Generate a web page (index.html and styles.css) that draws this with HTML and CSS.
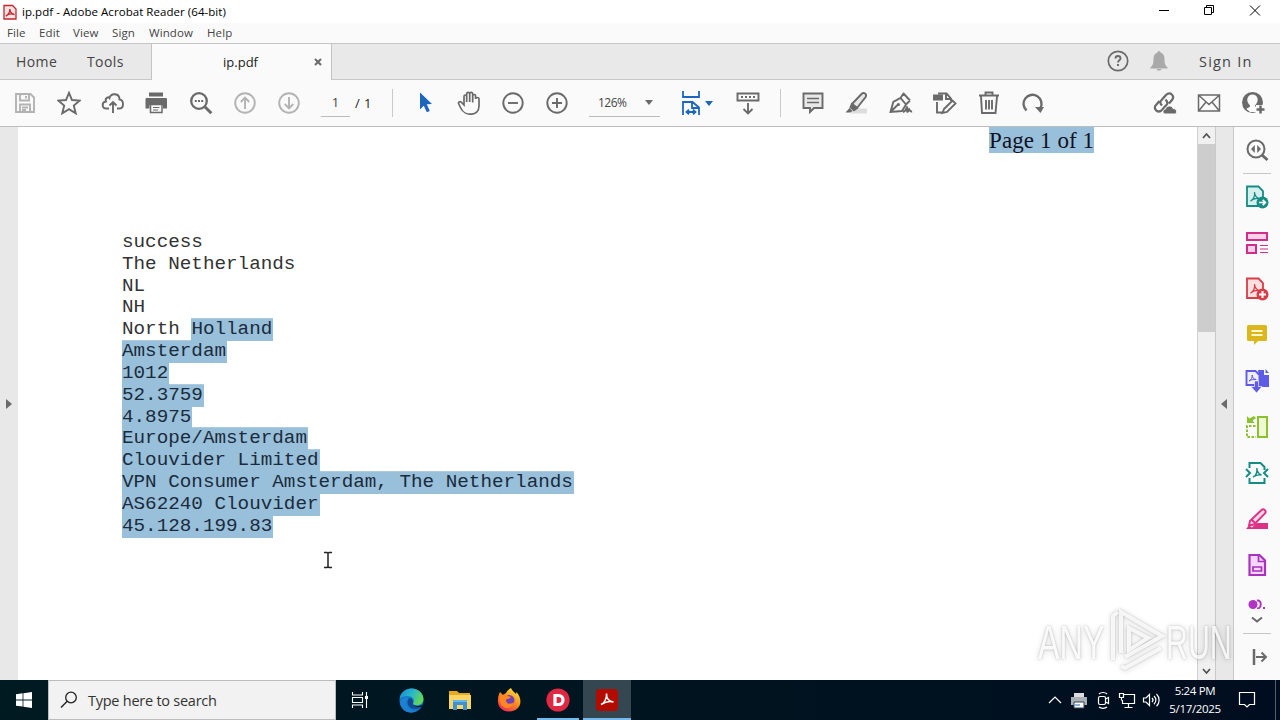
FILE: index.html
```
<!DOCTYPE html>
<html lang="en">
<head>
<meta charset="UTF-8">
<meta name="viewport" content="width=device-width, initial-scale=1.0">
<title>ip.pdf - Adobe Acrobat Reader (64-bit)</title>
<link rel="stylesheet" href="styles.css">
</head>
<body>
  <header class="titlebar">
    <svg class="app-icon" width="14" height="16" viewBox="0 0 14 16"><path d="M1 1.500h8.500L13 5v10H1z" fill="#fbe3e3" stroke="#c2272d" stroke-width="1.300"/><path d="M3 12c2-1 4-4 3.800-7C7 8 8.500 10 11.500 10.500 8.500 9.500 5 10 3 12z" fill="none" stroke="#c2272d" stroke-width="1.400"/></svg>
    <span class="title">ip.pdf - Adobe Acrobat Reader (64-bit)</span>
    <div class="window-buttons">
      <svg width="46" height="22" viewBox="0 0 46 22"><path d="M18 10.500h10"/></svg>
      <svg width="46" height="22" viewBox="0 0 46 22"><path d="M17.500 7.500h7v7h-7zM19.500 7.500v-2h7v7h-2"/></svg>
      <svg width="46" height="22" viewBox="0 0 46 22"><path d="M18 5.500l10 10M28 5.500l-10 10"/></svg>
    </div>
  </header>

  <nav class="menubar">
    <span class="m-file">File</span><span class="m-edit">Edit</span><span class="m-view">View</span><span class="m-sign">Sign</span><span class="m-window">Window</span><span class="m-help">Help</span>
  </nav>

  <div class="tabs">
    <span class="tab-home">Home</span>
    <span class="tab-tools">Tools</span>
    <div class="tab-doc"><span>ip.pdf</span>
      <svg class="close" width="8" height="8" viewBox="0 0 8 8"><path d="M1 1l6 6M7 1L1 7" stroke="#6a6a6a" stroke-width="2"/></svg>
    </div>
    <div class="account">
      <svg width="22" height="22" viewBox="0 0 22 22"><circle cx="11" cy="11" r="9.700" fill="none" stroke="#6a6a6a" stroke-width="1.700"/><path d="M8.500 8.500c0-3.300 5-3.300 5 0 0 1.800-2.500 1.800-2.500 4M11 14v2" fill="none" stroke="#6a6a6a" stroke-width="1.900"/></svg>
      <svg class="bell" width="18" height="20" viewBox="0 0 18 20"><path d="M9 0c1 0 1.500.8 1.500 1.600C13.500 2.500 14.500 5 14.500 8c0 5 1 6.500 3 8.500v1H.500v-1c2-2 3-3.500 3-8.500 0-3 1-5.500 4-6.400C7.500.8 8 0 9 0zM6.500 18h5c-.5 2-4.500 2-5 0z" fill="#a9a9a9"/></svg>
      <span>Sign In</span>
    </div>
  </div>

  <div class="toolbar">
    <div class="group files">
      <svg class="ic off" viewBox="0 0 24 24"><path d="M3 3h14.500L21 6.500V21H3zM7 3v6.500h9V3M13 5v2.500M7 21v-7.500h10V21M9 16.500h6M9 19h4"/></svg>
      <svg class="ic" viewBox="0 0 24 24"><path d="M12 1.800l3 7.200 7.800.6-6 5 1.900 7.700L12 18.200l-6.700 4.100 1.900-7.700-6-5L9 9z"/></svg>
      <svg class="ic" viewBox="0 0 24 24"><path d="M8 17.500H5.500C.500 17.500.500 11 5 10.500 3.500 7 7.500 5.500 8.500 7c1.500-5.500 10-5 10 1.500 4.500.5 5 9-.5 9h-2M12 22v-11M8.500 14.500L12 11l3.500 3.500"/></svg>
      <svg class="ic" viewBox="0 0 24 24"><path d="M4 1.500h14v4H4z" fill="#6a6a6a" stroke="none"/><path d="M1 7h20q1 0 1 1v9.500h-4V14H4.500v3.500H.500V8q0-1 1-1z" fill="#6a6a6a" stroke="none"/><path d="M5.500 13.500h11.500v8H5.500z" fill="#fafafa" stroke-width="1.500"/><path d="M8 16.500h6.500M8 19h5" stroke-width="1.200"/></svg>
      <svg class="ic" viewBox="0 0 24 24"><circle cx="10" cy="10" r="7.800" stroke-width="2.300"/><path d="M15.800 15.800l6.500 6.500" stroke-width="3"/><path d="M5.800 10h2M9 10h2M12.200 10h2" stroke-width="2"/></svg>
      <svg class="ic off" viewBox="0 0 24 24"><circle cx="12" cy="12" r="9.800"/><path d="M12 18V7M7.800 11L12 6.700l4.200 4.300"/></svg>
      <svg class="ic off" viewBox="0 0 24 24"><circle cx="12" cy="12" r="9.800"/><path d="M12 6v11M7.800 13l4.200 4.300 4.200-4.300"/></svg>
    </div>
    <span class="page-input">1</span><span class="page-total">/ 1</span>
    <i class="sep"></i>
    <div class="group pointer">
      <svg class="ic" viewBox="0 0 24 24"><path d="M7 1.500l12 11.500-5.200.3 3 6.600-3 1.400-3-6.500-3.800 3.600z" fill="#1c67bd" stroke="none"/></svg>
      <svg class="ic" viewBox="0 0 24 24"><path stroke-width="1.700" d="M7 14V5.500c0-2 2.700-2 2.700 0v5.500V3c0-2.300 3-2.300 3 0v8V3c0-2.300 3-2.300 3 0v8.500V5c0-2 2.900-2 2.900 0V8c0-2 3.400-2 3.400 0v7c0 11-14.500 10-18 2.500L1.800 13c-1-2 1.200-3 2.400-1.800z"/></svg>
      <svg class="ic" viewBox="0 0 24 24"><circle cx="12" cy="12" r="9.700"/><path d="M7 12h10"/></svg>
      <svg class="ic" viewBox="0 0 24 24"><circle cx="12" cy="12" r="9.700"/><path d="M7 12h10M12 7v10"/></svg>
    </div>
    <div class="zoom"><span>126%</span><b class="caret"></b></div>
    <svg class="ic fit" viewBox="0 0 24 24"><path d="M4 0v6h16V0M4 24V11h9.500l6.500 5.500V24M13 11v6h7M7.500 21h9M10 18.700L7.500 21l2.500 2.300M14 18.700l2.500 2.300-2.500 2.300" stroke="#1c67bd" stroke-width="1.800"/></svg>
    <b class="caret blue"></b>
    <svg class="ic scroll-mode" viewBox="0 0 24 24"><path d="M1.500 2.500h21v7h-21zM12 12v10M7.500 18l4.500 4.500 4.500-4.500M5 6h2M9 6h2M13 6h2M17 6h2"/></svg>
    <i class="sep second"></i>
    <div class="group annotate">
      <svg class="ic" viewBox="0 0 24 24"><path d="M2.500 2.500h19V17H13l-4 4v-4H2.500z" fill="#e8e8e8"/><path d="M6 7.500h12M6 11.500h12" stroke-width="1.300"/></svg>
      <svg class="ic" viewBox="0 0 24 24"><path d="M9 17.500h13v5H6z" fill="#ddd" stroke="none"/><path d="M7 13L17 2.500c2-1.500 5 .7 3.800 3.300L12 17z" fill="#e8e8e8"/><path d="M7 13l5 4-3 2.200-3.500-3z" fill="#6a6a6a"/><path d="M4.500 17l3 3-2 1.500H.500z" fill="#6a6a6a" stroke="none"/></svg>
      <svg class="ic" viewBox="0 0 24 24"><path d="M1.500 21L4.300 11 11.500 7l5.500 6.500-4 6.500zM1.500 21l8-8M11.500 7l3-4.500M17 13.500l4-4M14 2l7 7.500M14 21c3 0 3.500-5 4-5 .8 0-.5 5 .5 5s1.200-3 1.600-3 .3 3 3 2.500"/><circle cx="9.500" cy="13.500" r="1.500" fill="#6a6a6a" stroke="none"/></svg>
      <svg class="ic" viewBox="0 0 24 24"><path d="M1 4.500h8v4H1z" fill="#6a6a6a"/><path d="M5 2.500h8.500L18 7.500V10M13 3v5h5M4 11v10.500H9M11 18l8.500-8.500 3 3-8.500 8.500-4.500 1z"/></svg>
      <svg class="ic" viewBox="0 0 24 24"><path d="M2 4.500h20M8.500 4V1.500h7V4M4 5.500l1 16.500h13.500L20 5.500M9 9v9.500M12 9v9.500M15 9v9.500"/></svg>
      <svg class="ic" viewBox="0 0 24 24"><path d="M5.500 19.500A9 9 0 1 1 19.500 17" stroke-width="2.400"/><path d="M14 16h9l-3.500 6z" fill="#6a6a6a" stroke="none"/></svg>
    </div>
    <div class="group share">
      <svg class="ic" viewBox="0 0 24 24"><path d="M9 14.500c-3-3-1.500-4.500 0-6L13 4c4-4 9.500 1 6 5l-3 3.500M12.500 8.500c3.500 3.500 1.500 5-.5 7L9 19c-4 4-9.500-1.500-6-5l3.500-4" stroke-width="2.300"/><path d="M12 23c-3-.5-2.500-4.500.5-5 1-4 6.500-4 7.500-.5 4.500 0 4.500 5.500 1.500 5.500z" fill="#6a6a6a" stroke="#fafafa" stroke-width="1"/></svg>
      <svg class="ic" viewBox="0 0 24 24"><path d="M1.500 4h21v16h-21zM2 4.500l10 9 10-9M2 19.500L9 11M22 19.500L15 11" stroke-width="1.500"/></svg>
      <svg class="ic" viewBox="0 0 24 24"><circle cx="11.500" cy="11.500" r="10.500" fill="#6a6a6a" stroke="none"/><path d="M5.500 18c1-1.500 4-1.500 3.500-3.500-5-5-2.500-11 2.500-11s7.500 6 2.500 11c0 1 1 1.500 2 2V21H9z" fill="#fafafa" stroke="none"/><path d="M15 14h9v10h-9z" fill="#fafafa" stroke="none"/><path d="M19.500 14.500v8M15.500 18.500h8" stroke-width="2.500"/></svg>
    </div>
  </div>

  <main class="workspace">
    <div class="left-gutter"><svg width="6" height="10" viewBox="0 0 6 10"><path d="M0 0l6 5-6 5z" fill="#6a6a6a"/></svg></div>
    <div class="page">
      <div class="page-header"><mark>Page 1 of 1</mark></div>
      <div class="doc-text">
        <p>success</p>
        <p>The Netherlands</p>
        <p>NL</p>
        <p>NH</p>
        <p>North <mark>Holland</mark></p>
        <p><mark>Amsterdam</mark></p>
        <p><mark>1012</mark></p>
        <p><mark>52.3759</mark></p>
        <p><mark>4.8975</mark></p>
        <p><mark>Europe/Amsterdam</mark></p>
        <p><mark>Clouvider Limited</mark></p>
        <p><mark>VPN Consumer Amsterdam, The Netherlands</mark></p>
        <p><mark>AS62240 Clouvider</mark></p>
        <p><mark>45.128.199.83</mark></p>
      </div>
    </div>
    <div class="scrollbar">
      <svg width="17" height="17" viewBox="0 0 17 17"><path d="M5 11l3.500-4 3.500 4"/></svg>
      <div class="thumb"></div>
      <svg class="down" width="17" height="17" viewBox="0 0 17 17"><path d="M5 6l3.500 4L12 6"/></svg>
    </div>
    <div class="right-gutter"><svg width="6" height="10" viewBox="0 0 6 10"><path d="M6 0L0 5l6 5z" fill="#6a6a6a"/></svg></div>
    <aside class="tools">
      <svg class="tool search-tool" viewBox="0 0 24 24"><g fill="none" stroke="#6a6a6a"><circle cx="11" cy="11" r="8.500" stroke-width="2"/><path d="M17 17l5.500 5" stroke-width="3"/></g><path d="M9.800 7v8L6 11zM12.200 7v8L16 11z" fill="#6a6a6a"/></svg>
      <hr>
      <svg class="tool" viewBox="0 0 24 24"><g fill="#d5efee" stroke="#168d83" stroke-width="1.800"><path d="M2 1.500h11.500L18 6v15H2z"/><path d="M5.500 16c3-1.500 4.500-5 4-9 .3 4 2 6 5 6.500-3-.5-7 .5-9 2.500z" stroke-width="1.200"/></g><circle cx="17.500" cy="17.500" r="6" fill="#168d83"/><path d="M14 17.500h6M17.700 14.800l2.700 2.700-2.700 2.700" fill="none" stroke="#fff" stroke-width="1.700"/></svg>
      <svg class="tool" viewBox="0 0 24 24"><path d="M2 2h20v7H2zM2 14h9v8H2z" fill="#fbd0e8" stroke="#d12d8c" stroke-width="2"/><path d="M15 14.500h8M15 18h8M15 21.500h8" stroke="#d12d8c" stroke-width="1.200"/></svg>
      <svg class="tool" viewBox="0 0 24 24"><g fill="#fde0df" stroke="#d83c46" stroke-width="1.800"><path d="M2 1.500h11.500L18 6v15H2z"/><path d="M5.500 16c3-1.500 4.500-5 4-9 .3 4 2 6 5 6.500-3-.5-7 .5-9 2.500z" stroke-width="1.200"/></g><circle cx="17.500" cy="17.500" r="6" fill="#d83c46"/><path d="M14 17.500h7M17.500 14v7" stroke="#fff" stroke-width="2"/></svg>
      <svg class="tool" viewBox="0 0 24 24"><path d="M3.500 2h17q1.500 0 1.500 1.500v13Q22 18 20.500 18H13l-4 4v-4H3.500Q2 18 2 16.500v-13Q2 2 3.500 2z" fill="#dbb61d"/><path d="M6.500 8h11M6.500 12h11" stroke="#fff8cf" stroke-width="1.800"/></svg>
      <svg class="tool" viewBox="0 0 24 24"><path d="M13 1h6v5h5v12h-9z" fill="#5e5ce6"/><path d="M20.500 0L24 4h-3.500z" fill="#5e5ce6"/><path d="M1.500 2h9L14.500 6v10h-13z" fill="#eeeeff" stroke="#5e5ce6" stroke-width="1.900"/><path d="M4 12c2-1 3.500-3 3.200-6 .3 3 1.300 4 4 4.500-3 0-5 0-7.200 1.500z" fill="none" stroke="#5e5ce6"/><path d="M9.500 12h4v5.500H17L11.500 24 6 17.500h3.500z" fill="#5e5ce6" stroke="#fafafa" stroke-width=".6"/></svg>
      <svg class="tool" viewBox="0 0 24 24"><path d="M13 2h9v20h-9z" fill="#effad5" stroke="#89c22e" stroke-width="2"/><path d="M10.500 11H2v11h9" fill="none" stroke="#89c22e" stroke-width="2" stroke-dasharray="2.500 1.500"/><path d="M2 1l2.500 2.500L9 1l2 2-3.500 2.500L9.500 8H2z" fill="#89c22e"/></svg>
      <svg class="tool" viewBox="0 0 24 24"><path d="M4.500 7V2h11l4 4v3M4.500 17v5h15v-5" fill="none" stroke="#168d83" stroke-width="2"/><path d="M1 8l4 4-4 4M23 8l-4 4 4 4" fill="none" stroke="#168d83" stroke-width="2"/><path d="M8 16c3-1 4.500-5 3.800-9 .2 4 2 6 4.700 7-3-.5-6 .5-8.500 2z" fill="#d5efee" stroke="#168d83" stroke-width="1.400"/></svg>
      <svg class="tool" viewBox="0 0 24 24"><path d="M12 16h11v6H1l3-3.500 3 2z" fill="#dc3286"/><path d="M5 14L16.500 3c2-2 5.500.8 3.500 3.500L9 17.500l-5 1z" fill="#fbd7e9" stroke="#dc3286" stroke-width="1.900"/><path d="M7 13l4 4" stroke="#dc3286" stroke-width="2"/></svg>
      <svg class="tool" viewBox="0 0 24 24"><path d="M4.500 2h10L20 7.500V22H4.500z" fill="#f3d7fa" stroke="#aa31bd" stroke-width="2.200"/><path d="M13.500 2v6.500H20M8 14h8.500v4H8z" fill="none" stroke="#aa31bd" stroke-width="1.700"/></svg>
      <div class="clipped-tool"><svg width="24" height="10" viewBox="0 0 24 10"><circle cx="8" cy="5.500" r="4.500" fill="#b133c3"/><path d="M12 1.500c5-1 5 8 0 8" fill="none" stroke="#b133c3" stroke-width="2"/><path d="M18 8h2v2h-2z" fill="#b133c3"/></svg></div>
      <svg class="more" width="14" height="8" viewBox="0 0 14 8"><path d="M2 1.500l5 4 5-4" fill="none" stroke="#6a6a6a" stroke-width="2"/></svg>
      <hr class="last">
      <svg class="tool collapse" viewBox="0 0 24 24"><path d="M11 12h9.500M16.500 7.500l4.500 4.500-4.500 4.500" fill="none" stroke="#6a6a6a" stroke-width="2"/><path d="M9 4v16" stroke="#6a6a6a" stroke-width="2.500"/></svg>
    </aside>
  </main>

  <footer class="taskbar">
    <div class="start"><svg width="16" height="16" viewBox="0 0 16 16"><path d="M0 2.200l6.600-.9v6.200H0zM7.400 1.200L16 0v7.500H7.400zM0 8.400h6.600v6.200L0 13.700zM7.400 8.400H16V16l-8.600-1.200z" fill="#fff"/></svg></div>
    <div class="search">
      <svg width="18" height="18" viewBox="0 0 18 18"><circle cx="11" cy="6.500" r="5.300" fill="none" stroke="#222" stroke-width="1.300"/><path d="M7.200 10.300L1 16.500" stroke="#222" stroke-width="1.400"/></svg>
      <span>Type here to search</span>
    </div>
    <div class="apps">
      <div class="app task-view"><svg width="18" height="18" viewBox="0 0 18 18"><path d="M1.500 1v3h10V1M1.500 17v-3h10v3M1.500 6.500h10v5h-10zM15.500 1v16" fill="none" stroke="#fff" stroke-width="1.100"/><path d="M14 5h3v3h-3z" fill="#fff"/></svg></div>
      <div class="app"><svg width="25" height="25" viewBox="0 0 24 24"><defs><linearGradient id="edge" x1="0" y1="0" x2="1" y2=".4"><stop offset="0" stop-color="#1688d5"/><stop offset=".55" stop-color="#28b7ca"/><stop offset="1" stop-color="#61d65b"/></linearGradient></defs><circle cx="12" cy="12" r="11.500" fill="#1475c8"/><path d="M.6 11C1 4.500 6 .5 12 .5 19 .500 23.500 5.500 23.500 10.500c0 4-3 6-6.500 6-2.500 0-4-1-3.500-2 2-3 0-6.500-5-6.500C4 8 1 9.500.6 11z" fill="url(#edge)"/><path d="M9.500 10C5 13 8 22 16 22c-6 4-15 0-15-9 2-4 6-5 8.500-3z" fill="#1d80d2"/><path d="M9.500 10c-3.500 4 0 10.500 7 10 2.500-.2 4.500-1.500 5.500-2.500-3 1.500-10 1-8.500-3 .8-2-1.500-5-4-4.500z" fill="#12498e"/><path d="M13.500 14.500c-.5 1.500 1.500 3.300 5 2.800 2-.3 3.500-.6 4.500-2L22 18c-2 .5-9 1-8.500-3.500z" fill="#001923"/></svg></div>
      <div class="app"><svg width="24" height="22" viewBox="0 0 24 22"><path d="M1 2h8l2 2h11v4H1z" fill="#e9a91d"/><path d="M1 6h22v14H1z" fill="#fbd466"/><path d="M5 11h14v10h-4v-5H9v5H5z" fill="#3f91cf"/><path d="M5 11h14v2H5z" fill="#65b8e9"/></svg></div>
      <div class="app"><svg width="24" height="24" viewBox="0 0 24 24"><defs><linearGradient id="fox" x1=".8" y1="0" x2=".2" y2="1"><stop offset="0" stop-color="#ffe63c"/><stop offset=".5" stop-color="#ff8a20"/><stop offset="1" stop-color="#ee235e"/></linearGradient></defs><path d="M3 4l3 3 3-2c1-2 3-4 5-5 1 3 3 3.500 5 6l.5-2C26 11 25 23 12 23.500 0 23-1 12 3 4z" fill="url(#fox)"/><circle cx="12" cy="12.500" r="5.500" fill="#7040b6"/><path d="M3 8c4-2 6-1 8 0l3 1c-2 3-5 1-5 4 1 4 6 3 8 1-1 8-13 8-14-1z" fill="#ff8721"/></svg></div>
      <div class="app open"><svg width="24" height="24" viewBox="0 0 24 24"><circle cx="12" cy="12" r="11.600" fill="#df2942"/><path d="M9 7.500h3.500c6 0 6 9 0 9H9z" fill="none" stroke="#fff" stroke-width="3.200"/></svg></div>
      <div class="app open active"><svg width="22" height="22" viewBox="0 0 22 22"><rect width="22" height="22" rx="3.500" fill="#b30b00"/><path d="M5 15.500c3-1 6-6 5.500-11C10.500 9 13 12.500 17.500 13c-4-1.200-8.500 0-12.500 2.500z" fill="none" stroke="#fff" stroke-width="1.500"/></svg></div>
    </div>
    <div class="tray">
      <svg viewBox="0 0 24 24"><path d="M6 15l6-6 6 6"/></svg>
      <svg viewBox="0 0 24 24"><path d="M7 5h10v5H7z" fill="#ddd" stroke="none"/><path d="M4 9h16v8H4z" fill="#a9b0b6" stroke="none"/><path d="M7 14h10v6H7z" fill="#fff" stroke="#345" stroke-width="1"/><path d="M8 17h5" stroke="#4487cc"/></svg>
      <svg viewBox="0 0 24 24"><rect x="7.500" y="8.500" width="7" height="8" rx="1.500"/><path d="M14.500 11l3-1.500v6l-3-1.500M8 6c2-2 6-2 8 0M8 19c2 1.700 6 1.700 8 0"/></svg>
      <svg viewBox="0 0 24 24"><path d="M8.500 6.500h11v9h-12V12M13.500 15.500v4M9.500 19.500h8M4.500 5.500h4v4h-4zM6.500 9.500v3"/></svg>
      <svg viewBox="0 0 24 24"><path d="M4.500 10h2.500l3.500-3.500v11L7 14H4.500zM13 10c1.200 1.200 1.200 3 0 4.200M15 8c2.500 2.200 2.500 6 0 8.200M17.500 6c3.500 3.500 3.500 9 0 12.200"/></svg>
    </div>
    <div class="clock"><span class="time">5:24 PM</span><span class="date">5/17/2025</span></div>
    <svg class="notify" width="18" height="18" viewBox="0 0 18 18"><path d="M1.500 1.500h15v12h-5L9 16l-2.500-2.500h-5z" fill="none" stroke="#fff" stroke-width="1.200"/></svg>
    <i class="desktop-edge"></i>
  </footer>

  <svg class="watermark" width="250" height="80" viewBox="0 0 250 80">
    <text transform="translate(8 59) scale(.66 1)">ANY</text>
    <path d="M83 60V16l5-4M91 53V12l41 24-37 21M91 66l4 2 36-20"/>
    <path d="M99 28v22l19-12z"/>
    <text transform="translate(136 59) scale(.62 1)">RUN</text>
  </svg>
  <svg class="cursor" width="10" height="18" viewBox="0 0 10 18"><path d="M1 1.500h3l1 1 1-1h3M5 2.500v13M1 16.500h3l1-1 1 1h3" fill="none" stroke="#222" stroke-width="1.500"/></svg>
</body>
</html>
```
FILE: styles.css
```
* { box-sizing: border-box; }
body { margin: 0; width: 1280px; height: 720px; overflow: hidden; display: flex; flex-direction: column; position: relative; background: #fff; color: #444; font-family: "Open Sans", "Noto Sans", sans-serif; }
svg { display: block; flex: none; }

.titlebar { height: 23px; display: flex; align-items: center; padding-left: 3px; color: #000; }
.app-icon { margin-right: 5px; }
.title { font-size: 11.5px; letter-spacing: 0.05px; white-space: nowrap; }
.window-buttons { margin-left: auto; display: flex; padding: 0 2px 2px 0; }
.window-buttons svg:not(:last-child) { position: relative; left: 1px; }
.window-buttons path { fill: none; stroke: #000; stroke-width: 1; }

.menubar { height: 20px; background: #fafafa; display: flex; align-items: center; padding: 0 0 2px 7px; font-size: 11.5px; letter-spacing: 0.1px; }
.m-file { width: 32px; }
.m-edit { width: 34px; }
.m-view { width: 39px; }
.m-sign { width: 37px; }
.m-window { width: 58px; }

.tabs { height: 37px; background: #e9e9e9; border-top: 1px solid #c6c6c6; border-bottom: 1px solid #c8c8c8; display: flex; align-items: center; font-size: 14px; letter-spacing: 0.4px; }
.tab-home { margin-left: 16px; width: 71px; }
.tab-tools { width: 64px; }
.tab-doc { width: 181px; height: 36px; background: #fafafa; border-left: 1px solid #c3c3c3; border-right: 1px solid #c3c3c3; display: flex; align-items: center; justify-content: flex-end; padding-right: 9px; font-size: 13px; color: #222; letter-spacing: 0; }
.close { margin-left: 56px; }
.account { margin-left: auto; display: flex; align-items: center; padding: 0 25px 1px 0; font-size: 14.5px; letter-spacing: 1.2px; white-space: nowrap; }
.account span { width: 56px; }
.bell { margin: 0 31px 0 21px; }

.toolbar { height: 47px; background: #fafafa; border-bottom: 1px solid #bdbdbd; display: flex; align-items: center; padding-left: 3px; font-size: 13px; }
.group { display: flex; }
.ic { width: 24px; height: 24px; fill: none; stroke: #6a6a6a; stroke-width: 1.9; }
.group .ic { margin: 0 10px; }
.toolbar .off { stroke: #b3b3b3; }
.page-input { width: 29px; height: 27px; margin-left: 10px; text-align: center; border-bottom: 1px solid #bbb; line-height: 25px; }
.page-total { margin-left: 5px; width: 17px; color: #222; white-space: nowrap; letter-spacing: 0.4px; }
.sep { width: 1px; height: 28px; margin-left: 20px; background: #cacaca; }
.pointer { margin-left: 10px; }
.zoom { width: 71px; height: 27px; margin-left: 10px; padding: 0 7px 0 9px; border-bottom: 1px solid #bbb; display: flex; align-items: center; justify-content: space-between; font-size: 12px; letter-spacing: -0.5px; }
.caret { border: 4px solid transparent; border-top: 5px solid #6a6a6a; border-bottom: 0; }
.caret.blue { border-top-color: #1c67bd; margin-left: 2px; }
.fit { margin-left: 19px; }
.scroll-mode { margin-left: 23px; }
.sep.second { margin-left: 20px; }
.annotate { margin-left: 10px; }
.share { margin-left: auto; padding-right: 5px; }

.workspace { height: 553px; display: flex; }
.left-gutter { width: 18px; background: #e8e8e8; display: flex; align-items: center; padding-left: 6px; }
.page { width: 1180px; background: #fff; border-right: 1px solid #d0d0d0; color: #111; }
.page mark { background: #99c0da; color: #112; display: inline-block; }
.page-header { height: 105px; text-align: right; padding-right: 103px; font: 23px/26px "Liberation Serif", serif; }
.page-header mark { width: 105px; height: 26px; line-height: 28px; text-align: left; white-space: nowrap; letter-spacing: 0.1px; }
.doc-text { padding-left: 104px; font: 19.27px/21.83px "Liberation Mono", monospace; color: #333; }
.doc-text p { margin: 0; height: 21.83px; white-space: pre; }
.doc-text mark { color: #1b2b3c; padding-right: 1px; box-shadow: 0 -0.8px #99c0da; }
.scrollbar { width: 17px; background: #f0f0f0; display: flex; flex-direction: column; }
.scrollbar path { fill: none; stroke: #505050; stroke-width: 1.7; }
.thumb { height: 188px; background: #cdcdcd; }
.down { margin-top: auto; }
.right-gutter { width: 19px; background: #e8e8e8; border-left: 1px solid #c9c9c9; border-right: 1px solid #c9c9c9; display: flex; align-items: center; padding-left: 5px; }
.tools { flex: 1; background: #fafafa; display: flex; flex-direction: column; align-items: center; padding-top: 11px; }
.tool { width: 24px; height: 24px; margin-bottom: 22px; }
.search-tool { margin-bottom: 11px; }
.tools hr { flex: none; width: 28px; height: 1px; border: 0; background: #c6c6c6; margin: 0 0 11px; }
.clipped-tool { flex: none; height: 10px; overflow: hidden; margin-bottom: 7px; }
.more { margin-bottom: 9px; }
.collapse { margin-bottom: 0; }

.taskbar { height: 40px; background: linear-gradient(90deg, #001a22, #00131f 60%, #000d20); color: #fff; display: flex; align-items: center; }
.start { width: 48px; display: flex; justify-content: center; }
.search { width: 288px; height: 40px; background: #f2f2f2; border: 1px solid #bbb; color: #333; display: flex; align-items: center; padding-left: 11px; font-size: 14.5px; }
.search span { margin-left: 10px; letter-spacing: -0.25px; }
.apps { display: flex; gap: 1px; }
.app { width: 48px; height: 40px; display: flex; align-items: center; justify-content: center; }
.task-view { margin-right: 2px; }
.open { border-bottom: 2px solid #76b9ed; border-top: 2px solid transparent; }
.open:not(.active) { width: 42px; margin: 0 3px; }
.active { background: #34464f; border-top-color: #34464f; }
.tray { margin-left: auto; display: flex; }
.tray svg { width: 24px; height: 24px; fill: none; stroke: #fff; stroke-width: 1.2; }
.clock { width: 64px; display: flex; flex-direction: column; align-items: center; font-size: 11.5px; line-height: 18px; letter-spacing: -0.35px; margin-right: 11px; }
.notify { margin-right: 19px; }
.desktop-edge { width: 5px; height: 40px; border-left: 1px solid #56606b; }

.watermark { position: absolute; left: 1030px; top: 600px; opacity: .85; filter: drop-shadow(0 0 1px rgba(0,0,0,.3)) drop-shadow(0 1px 3px rgba(0,0,0,.18)); }
.watermark text { font-family: "Liberation Sans", sans-serif; font-size: 49px; fill: #fff; opacity: .9; }
.watermark path { fill: none; stroke: #fff; stroke-width: 4; opacity: .85; }
.cursor { position: absolute; left: 323px; top: 551px; }
```
